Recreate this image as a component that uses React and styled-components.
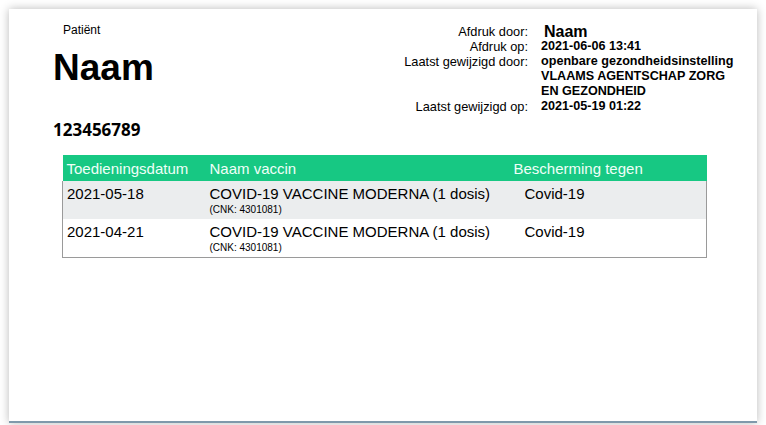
import React from 'react';
import styled, { createGlobalStyle } from 'styled-components';

const GlobalStyle = createGlobalStyle`
  html, body {
    margin: 0;
    padding: 0;
    background: #ffffff;
    font-family: 'Liberation Sans', Arial, sans-serif;
  }
`;

const Viewer = styled.div`
  padding: 9px 9px 0 9px;
  height: 425px;
  box-sizing: border-box;
  overflow: hidden;
`;

const Page = styled.div`
  width: 748px;
  height: 414px;
  box-sizing: border-box;
  background: #ffffff;
  box-shadow: 0 0 9px rgba(0, 0, 0, 0.28);
  border-bottom: 2px solid #7f99ab;
  padding: 14px 21px 0 44px;
  color: #000;
`;

const Top = styled.div`
  display: flex;
  align-items: flex-start;
`;

const Patient = styled.div`
  display: flex;
  flex-direction: column;
`;

const Label = styled.div`
  font-size: 12px;
  line-height: 14px;
  margin-left: 10px;
`;

const BigName = styled.div`
  font-size: 37px;
  line-height: 44px;
  font-weight: 700;
  margin-top: 9px;
`;

const PatientId = styled.div`
  font-family: 'Open Sans', sans-serif;
  font-size: 17px;
  line-height: 20px;
  font-weight: 700;
  margin-top: 30px;
`;

const Meta = styled.div`
  margin-left: auto;
  display: grid;
  grid-template-columns: auto 195px;
  column-gap: 13px;
  margin-top: 1px;
`;

const MetaKey = styled.div`
  font-size: 12.8px;
  line-height: 15px;
  text-align: right;
  align-self: ${({ $top }) => ($top ? 'start' : 'center')};
`;

const MetaValue = styled.div`
  font-size: ${({ $large }) => ($large ? '16px' : '12.6px')};
  line-height: 15px;
  font-weight: 700;
  padding-left: ${({ $large }) => ($large ? '3px' : '0')};
`;

const Table = styled.table`
  margin: 15px 0 0 9px;
  width: 645px;
  border-collapse: collapse;
  table-layout: fixed;
`;

const HeadCell = styled.th`
  box-sizing: border-box;
  background: #17c883;
  color: #effff8;
  font-weight: 400;
  font-size: 15px;
  text-align: left;
  height: 26px;
  padding: 0 4px;
  width: ${({ $w }) => $w};
`;

const Body = styled.tbody`
  border: 1px solid #9a9a9a;
  border-top: none;
`;

const Row = styled.tr`
  background: ${({ $shade }) => ($shade ? '#ebedee' : '#ffffff')};
`;

const Cell = styled.td`
  box-sizing: border-box;
  vertical-align: top;
  padding: 4px 4px 3px ${({ $indent }) => ($indent ? '15px' : '4px')};
  font-size: 15px;
  line-height: 17px;
`;

const Cnk = styled.div`
  font-size: 10px;
  line-height: 12px;
  margin-top: 2px;
`;

const rows = [
  { date: '2021-05-18', vaccine: 'COVID-19 VACCINE MODERNA (1 dosis)', cnk: '(CNK: 4301081)', against: 'Covid-19' },
  { date: '2021-04-21', vaccine: 'COVID-19 VACCINE MODERNA (1 dosis)', cnk: '(CNK: 4301081)', against: 'Covid-19' },
];

const App = () => {
  return (
    <Viewer>
      <GlobalStyle />
      <Page>
        <Top>
          <Patient>
            <Label>Patiënt</Label>
            <BigName>Naam</BigName>
            <PatientId>123456789</PatientId>
          </Patient>
          <Meta>
            <MetaKey>Afdruk door:</MetaKey>
            <MetaValue $large>Naam</MetaValue>
            <MetaKey>Afdruk op:</MetaKey>
            <MetaValue>2021-06-06 13:41</MetaValue>
            <MetaKey $top>Laatst gewijzigd door:</MetaKey>
            <MetaValue>
              openbare gezondheidsinstelling
              <br />
              VLAAMS AGENTSCHAP ZORG
              <br />
              EN GEZONDHEID
            </MetaValue>
            <MetaKey>Laatst gewijzigd op:</MetaKey>
            <MetaValue>2021-05-19 01:22</MetaValue>
          </Meta>
        </Top>
        <Table>
          <thead>
            <tr>
              <HeadCell $w="143px">Toedieningsdatum</HeadCell>
              <HeadCell $w="304px">Naam vaccin</HeadCell>
              <HeadCell>Bescherming tegen</HeadCell>
            </tr>
          </thead>
          <Body>
            {rows.map((row, rowIdx) => (
              <Row key={rowIdx} $shade={rowIdx % 2 === 0}>
                <Cell>{row.date}</Cell>
                <Cell>
                  {row.vaccine}
                  <Cnk>{row.cnk}</Cnk>
                </Cell>
                <Cell $indent>{row.against}</Cell>
              </Row>
            ))}
          </Body>
        </Table>
      </Page>
    </Viewer>
  );
};

export default App;
